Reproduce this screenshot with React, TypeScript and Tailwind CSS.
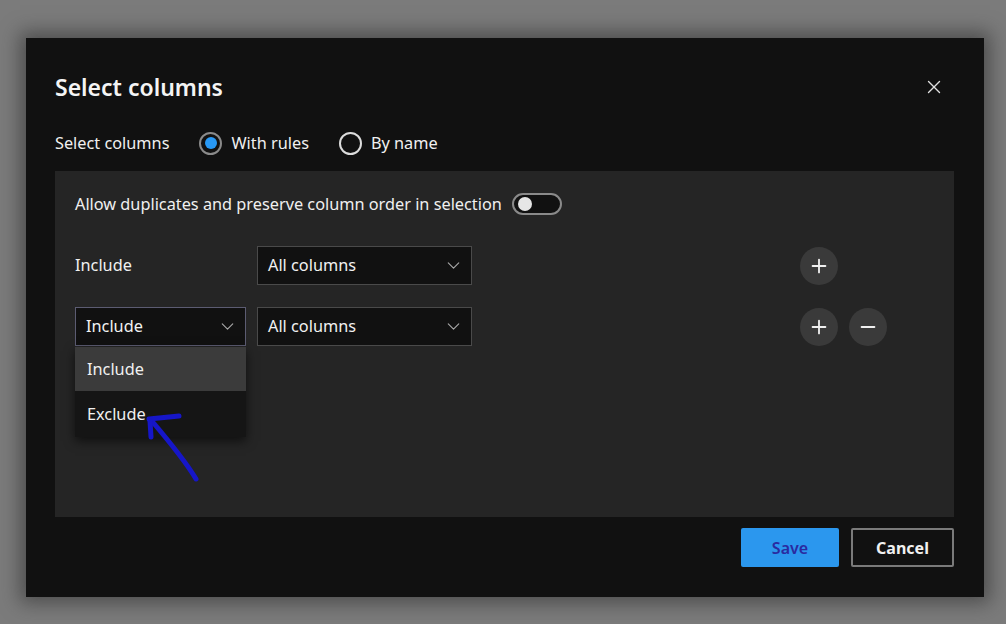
import { ChevronDown, Plus, Minus, X } from "lucide-react";

const font = { fontFamily: "'Noto Sans', 'Open Sans', sans-serif" };

function Select({ value, focused = false }: { value: string; focused?: boolean }) {
  return (
    <div
      className={
        "flex items-center justify-between h-[39px] pl-[10px] pr-[7px] bg-[#111111] border text-[16.3px] text-[#f2f2f2] " +
        (focused ? "border-[#5c5c72]" : "border-[#4a4a4a]")
      }
    >
      <span>{value}</span>
      <ChevronDown size={21} strokeWidth={1.3} className="text-[#a8a8a8]" />
    </div>
  );
}

function RoundButton({ kind }: { kind: "plus" | "minus" }) {
  return (
    <button className="w-[38px] h-[38px] rounded-full bg-[#3a3a3a] flex items-center justify-center text-[#f0f0f0]">
      {kind === "plus" ? <Plus size={22} strokeWidth={2} /> : <Minus size={22} strokeWidth={2} />}
    </button>
  );
}

export default function App() {
  return (
    <div className="w-[1006px] h-[624px] bg-[#7b7b7b] pt-[38px] pl-[26px] overflow-hidden" style={font}>
      <div className="relative w-[958px] h-[559px] bg-[#111111] shadow-[0_0_18px_6px_rgba(40,40,40,0.55)] flex flex-col px-[29px] pr-[30px]">
        {/* Header */}
        <div className="flex items-center justify-between pt-[20px] h-[78px]">
          <h1 className="text-[23px] font-semibold text-[#f4f4f4]">Select columns</h1>
          <X size={22} strokeWidth={1.5} className="text-[#e0e0e0] mr-[9px]" />
        </div>

        {/* Mode radios */}
        <div className="flex items-center h-[54px] text-[16.3px] text-[#f0f0f0]">
          <span>Select columns</span>
          <span className="ml-[30px] w-[23px] h-[23px] rounded-full border-2 border-[#8a8a8a] flex items-center justify-center">
            <span className="w-[12px] h-[12px] rounded-full bg-[#2899f5]" />
          </span>
          <span className="ml-[9px]">With rules</span>
          <span className="ml-[30px] w-[23px] h-[23px] rounded-full border-2 border-[#dcdcdc]" />
          <span className="ml-[9px]">By name</span>
        </div>

        {/* Rules panel */}
        <div className="relative mt-[1px] h-[346px] bg-[#252525] pl-[20px] text-[16.3px] text-[#f0f0f0]">
          <div className="flex items-center h-[66px]">
            <span>Allow duplicates and preserve column order in selection</span>
            <span className="ml-[10px] w-[50px] h-[22px] rounded-full border-2 border-[#8a8a8a] bg-[#111111] flex items-center pl-[4px]">
              <span className="w-[14px] h-[14px] rounded-full bg-[#e6e6e6]" />
            </span>
          </div>

          <div className="flex items-center mt-[9px]">
            <span className="w-[171px]">Include</span>
            <div className="w-[215px] ml-[11px]">
              <Select value="All columns" />
            </div>
            <div className="ml-[328px]">
              <RoundButton kind="plus" />
            </div>
          </div>

          <div className="flex items-center mt-[22px]">
            <div className="relative w-[171px]">
              <Select value="Include" focused />
              <div className="absolute left-0 top-[40px] w-[171px] bg-[#151515] shadow-[0_4px_10px_rgba(0,0,0,0.6)] z-10">
                <div className="h-[44px] flex items-center pl-[12px] bg-[#3b3b3b]">Include</div>
                <div className="h-[46px] flex items-center pl-[12px]">Exclude</div>
              </div>
            </div>
            <div className="w-[215px] ml-[11px]">
              <Select value="All columns" />
            </div>
            <div className="ml-[328px] flex gap-[11px]">
              <RoundButton kind="plus" />
              <RoundButton kind="minus" />
            </div>
          </div>
        </div>

        {/* Footer */}
        <div className="flex justify-end gap-[12px] mt-[11px]">
          <button className="w-[98px] h-[39px] bg-[#2b97ee] text-[#2a2aa0] text-[16px] font-semibold rounded-[2px]">
            Save
          </button>
          <button className="w-[103px] h-[39px] bg-[#111111] border-2 border-[#7a7a7a] text-[#f0f0f0] text-[16px] font-bold rounded-[2px]">
            Cancel
          </button>
        </div>

        {/* Hand-drawn annotation arrow */}
        <svg className="absolute left-0 top-0 pointer-events-none z-20" width="958" height="559">
          <g transform="translate(-26 -38)" stroke="#1616c8" strokeWidth="5" strokeLinecap="round" fill="none">
            <path d="M196 479 C186 462 168 440 151 420" />
            <path d="M149 419 L179 416" />
            <path d="M150 421 L151 437" />
          </g>
        </svg>
      </div>
    </div>
  );
}
